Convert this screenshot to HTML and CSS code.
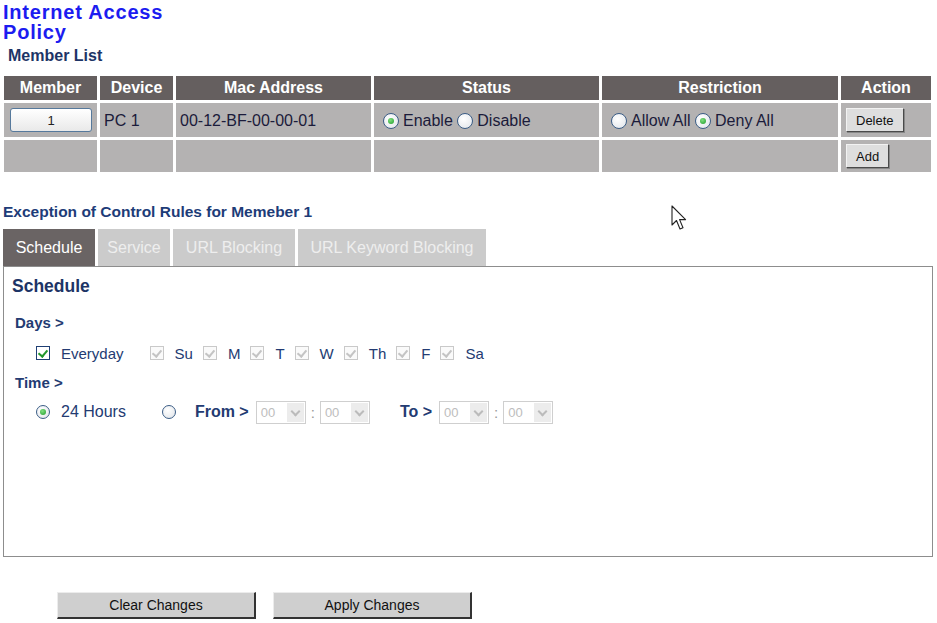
FILE: index.html
```html
<!DOCTYPE html>
<html lang="en">
<head>
    <meta charset="UTF-8">
    <title>Internet Access Policy</title>
    <link rel="stylesheet" href="styles.css">
</head>
<body>
    <div class="page">
        <h1 class="page-title">Internet Access<br>Policy</h1>
        <h2 class="list-title">Member List</h2>

        <table class="member-table">
            <colgroup>
                <col style="width: 93px">
                <col style="width: 73px">
                <col style="width: 195px">
                <col style="width: 225px">
                <col style="width: 236px">
                <col style="width: 90px">
            </colgroup>
            <tr class="head-row">
                <th>Member</th>
                <th>Device</th>
                <th>Mac Address</th>
                <th>Status</th>
                <th>Restriction</th>
                <th>Action</th>
            </tr>
            <tr class="data-row">
                <td class="member-cell"><button class="member-btn">1</button></td>
                <td>PC 1</td>
                <td>00-12-BF-00-00-01</td>
                <td class="radio-cell">
                    <span class="radio checked"></span>Enable
                    <span class="radio"></span>Disable
                </td>
                <td class="radio-cell">
                    <span class="radio"></span>Allow All
                    <span class="radio checked"></span>Deny All
                </td>
                <td class="action-cell"><button class="small-btn">Delete</button></td>
            </tr>
            <tr class="empty-row">
                <td></td>
                <td></td>
                <td></td>
                <td></td>
                <td></td>
                <td class="action-cell"><button class="small-btn">Add</button></td>
            </tr>
        </table>

        <h3 class="rules-title">Exception of Control Rules for Memeber 1</h3>

        <div class="tabs">
            <div class="tab active">Schedule</div>
            <div class="tab">Service</div>
            <div class="tab">URL Blocking</div>
            <div class="tab">URL Keyword Blocking</div>
        </div>

        <div class="tab-panel">
            <div class="panel-title">Schedule</div>

            <div class="field-label days-label">Days &gt;</div>
            <div class="days-row">
                <label class="day everyday"><span class="check on"></span>Everyday</label>
                <label class="day"><span class="check off"></span>Su</label>
                <label class="day"><span class="check off"></span>M</label>
                <label class="day"><span class="check off"></span>T</label>
                <label class="day"><span class="check off"></span>W</label>
                <label class="day"><span class="check off"></span>Th</label>
                <label class="day"><span class="check off"></span>F</label>
                <label class="day"><span class="check off"></span>Sa</label>
            </div>

            <div class="field-label time-label">Time &gt;</div>
            <div class="time-row">
                <label class="hours"><span class="radio checked"></span>24 Hours</label>
                <span class="radio range-radio"></span>
                <span class="range-label">From &gt;</span>
                <div class="select"><span>00</span><i></i></div>
                <span class="colon">:</span>
                <div class="select"><span>00</span><i></i></div>
                <span class="range-label to-label">To &gt;</span>
                <div class="select"><span>00</span><i></i></div>
                <span class="colon">:</span>
                <div class="select"><span>00</span><i></i></div>
            </div>
        </div>

        <div class="actions">
            <button class="big-btn">Clear Changes</button>
            <button class="big-btn">Apply Changes</button>
        </div>
    </div>

    <!-- mouse pointer in the screenshot -->
    <svg class="pointer" width="18" height="28" viewBox="0 0 18 28">
        <path d="M1 1 L1 20 L5.5 15.5 L9 24 L12 22.8 L8.6 14.6 L14.6 14.6 Z" fill="#fff" stroke="#222" stroke-width="1.1" stroke-linejoin="round"/>
    </svg>
</body>
</html>
```

FILE: styles.css
```css
/* General */
body {
    margin: 0;
    padding: 0;
    background: #fff;
    font-family: 'Liberation Sans', Arial, sans-serif;
    color: #1b1b3a;
}

.page {
    padding: 0 4px 0 3px;
}

.page-title {
    margin: 0;
    padding-top: 2px;
    font-size: 20px;
    line-height: 20px;
    letter-spacing: 0.8px;
    font-weight: bold;
    color: #1c1cf0;
}

.list-title {
    margin: 5px 0 0 5px;
    font-size: 16px;
    line-height: 18px;
    color: #1d3466;
}

/* Member table */
.member-table {
    margin: 8px 0 0 -2px;
    border-collapse: separate;
    border-spacing: 3px;
    table-layout: fixed;
    width: 933px;
}

.member-table th {
    height: 24px;
    padding: 0;
    background: #655f5f;
    color: #fff;
    font-size: 16px;
    font-weight: bold;
    text-align: center;
}

.member-table td {
    background: #b4b2b2;
    padding: 2px 0 0 4px;
    font-size: 16px;
    white-space: nowrap;
}

.data-row td {
    height: 32px;
}

.empty-row td {
    height: 30px;
}

.member-table .member-cell {
    padding: 0 0 0 6px;
}

.member-btn {
    display: block;
    width: 82px;
    height: 24px;
    border: 1px solid #56799c;
    border-radius: 3px;
    background: linear-gradient(#ffffff, #e9e9e9);
    font-family: inherit;
    font-size: 13px;
    color: #222;
}

.member-table .radio-cell {
    padding-left: 9px;
}

.radio-cell .radio {
    width: 16px;
    height: 16px;
    margin-right: 4px;
    vertical-align: -3px;
}

.radio-cell .radio.checked::after {
    left: 4px;
    top: 4px;
}

.member-table .action-cell {
    padding: 0 0 0 5px;
}

.small-btn {
    display: block;
    height: 24px;
    padding: 0 9px;
    border: 1px solid;
    border-color: #f2f2f2 #4a4a4a #4a4a4a #f2f2f2;
    box-shadow: 1px 1px 0 #888;
    background: #dedede;
    font-family: inherit;
    font-size: 13px;
    color: #111;
}

/* Radio and checkbox look */
.radio {
    display: inline-block;
    box-sizing: border-box;
    width: 14px;
    height: 14px;
    border: 1px solid #3b5d86;
    border-radius: 50%;
    background: radial-gradient(circle at 40% 35%, #ffffff, #dfe3e8);
    vertical-align: -2px;
    position: relative;
}

.radio.checked::after {
    content: "";
    position: absolute;
    left: 3px;
    top: 3px;
    width: 6px;
    height: 6px;
    border-radius: 50%;
    background: radial-gradient(circle at 40% 35%, #7fe07f, #1f9a2a);
}

.check {
    display: inline-block;
    box-sizing: border-box;
    width: 14px;
    height: 14px;
    border: 1px solid #c9c9c9;
    background: #fafafa;
    position: relative;
    margin-right: 11px;
}

.check::after {
    content: "";
    position: absolute;
    left: 3px;
    top: 1px;
    width: 4px;
    height: 7px;
    border: solid #c4c4c4;
    border-width: 0 2px 2px 0;
    transform: rotate(40deg);
}

.check.on {
    border-color: #1f3f74;
    background: #fff;
}

.check.on::after {
    border-color: #23962b;
}

/* Rules section */
.rules-title {
    margin: 28px 0 0 0;
    font-size: 15.5px;
    line-height: 18px;
    color: #1d3c78;
}

.tabs {
    display: flex;
    gap: 3px;
    margin-top: 8px;
}

.tab {
    height: 37px;
    line-height: 37px;
    text-align: center;
    font-size: 16px;
    background: #cbcbcb;
    color: #eeeeee;
}

.tab:nth-child(1) { width: 92px; }
.tab:nth-child(2) { width: 72px; }
.tab:nth-child(3) { width: 122px; }
.tab:nth-child(4) { width: 188px; }

.tab.active {
    background: #6a6464;
    color: #fff;
}

.tab-panel {
    box-sizing: border-box;
    height: 291px;
    border: 1px solid #8d8d8d;
    padding: 9px 0 0 8px;
    color: #233b72;
}

.panel-title {
    height: 20px;
    line-height: 20px;
    font-size: 17.5px;
    font-weight: bold;
    color: #1d3466;
}

.field-label {
    height: 18px;
    line-height: 18px;
    margin-left: 3px;
    font-size: 15px;
    font-weight: bold;
}

.days-label {
    margin-top: 18px;
}

.time-label {
    margin-top: 11px;
}

.days-row {
    display: flex;
    align-items: center;
    height: 20px;
    margin: 11px 0 0 24px;
    font-size: 15px;
}

.day {
    display: flex;
    align-items: center;
    margin-right: 10px;
}

.day.everyday {
    margin-right: 26px;
}

.time-row {
    display: flex;
    align-items: center;
    height: 24px;
    margin: 8px 0 0 24px;
    font-size: 16px;
}

.time-row .radio {
    margin-right: 11px;
}

.hours {
    display: flex;
    align-items: center;
    margin-right: 36px;
}

.range-radio {
    margin-right: 19px !important;
}

.range-label {
    font-weight: bold;
    margin-right: 7px;
}

.to-label {
    margin-left: 30px;
}

.colon {
    margin: 0 5px;
    font-size: 15px;
    color: #999;
}

.select {
    display: flex;
    box-sizing: border-box;
    width: 50px;
    height: 23px;
    border: 1px solid #cfcfcf;
    background: #fff;
}

.select span {
    flex: 1;
    padding-left: 4px;
    line-height: 21px;
    font-size: 13px;
    color: #bdbdbd;
}

.select i {
    width: 17px;
    margin: 1px;
    background: #ececec;
    position: relative;
}

.select i::after {
    content: "";
    position: absolute;
    left: 5px;
    top: 5px;
    width: 5px;
    height: 5px;
    border: solid #bbbbbb;
    border-width: 0 2px 2px 0;
    transform: rotate(45deg);
}

/* Bottom buttons */
.actions {
    display: flex;
    gap: 17px;
    margin: 35px 0 0 54px;
}

.big-btn {
    width: 199px;
    height: 27px;
    border: 1px solid;
    border-color: #ececec #333 #333 #ececec;
    border-width: 1px 2px 2px 1px;
    background: #cfcfcf;
    font-family: inherit;
    font-size: 14px;
    color: #111;
}

.pointer {
    position: absolute;
    left: 671px;
    top: 205px;
}
```
